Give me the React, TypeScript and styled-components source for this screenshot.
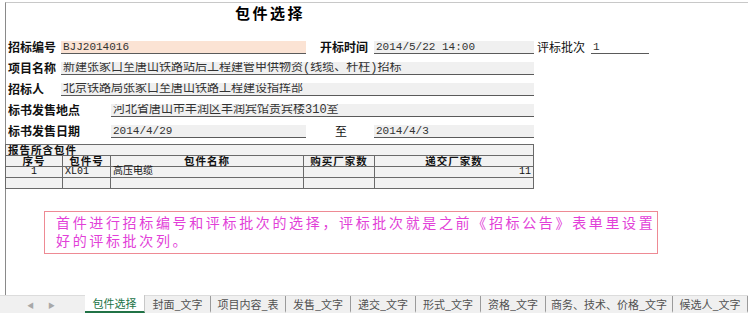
import styled, { createGlobalStyle } from "styled-components";

const GlobalStyle = createGlobalStyle`
    html, body {
        margin: 0;
        padding: 0;
        background: #ffffff;
        font-family: "Noto Sans CJK SC", "Liberation Sans", sans-serif;
    }
`;

const Page = styled.div`
    width: 748px;
    height: 313px;
    display: flex;
    flex-direction: column;
    overflow: hidden;
    background: #ffffff;
`;

const Sheet = styled.section`
    flex: 1;
    margin-top: 2px;
    margin-left: 5px;
    border-top: 1px solid #c8c8c8;
    border-left: 1px solid #8a8a8a;
    display: flex;
    flex-direction: column;
`;

const Title = styled.h2`
    width: 528px;
    margin: 0;
    padding-top: 1px;
    height: 29px;
    text-align: center;
    font-size: 15px;
    line-height: 18px;
    letter-spacing: 2.5px;
    font-weight: 700;
    color: #000;
`;

const Row = styled.div`
    display: flex;
    align-items: flex-end;
    height: 21px;
`;

const Label = styled.span<{ $w: number; $pl?: number; $normal?: boolean; $center?: boolean }>`
    width: ${(p) => p.$w}px;
    padding-left: ${(p) => p.$pl ?? 2}px;
    box-sizing: border-box;
    font-size: 12px;
    line-height: 14px;
    font-weight: ${(p) => (p.$normal ? 400 : 700)};
    text-align: ${(p) => (p.$center ? "center" : "left")};
    color: #111;
    white-space: nowrap;
`;

const Field = styled.span<{ $w: number; $bg?: string; $latin?: boolean }>`
    width: ${(p) => p.$w}px;
    height: 12px;
    box-sizing: content-box;
    padding-left: 2px;
    background: ${(p) => p.$bg ?? "#f0f0f0"};
    border-bottom: 1px solid #5a5a5a;
    font-family: ${(p) => (p.$latin ? `"Liberation Mono", "DejaVu Sans Mono", monospace` : `"Liberation Mono", "Noto Sans CJK SC", monospace`)};
    font-size: ${(p) => (p.$latin ? 11 : 12)}px;
    line-height: 13px;
    color: #333;
    white-space: nowrap;
    overflow: hidden;
`;

const Table = styled.table`
    margin-top: 6px;
    width: 528px;
    border-collapse: collapse;
    table-layout: fixed;
    font-size: 10px;
    color: #111;
    margin-left: -1px;
`;

const Cell = styled.td<{ $align?: string; $bold?: boolean }>`
    height: 10px;
    padding: 0 2px;
    border: 1px solid #6a6a6a;
    background: #f2f2f2;
    line-height: 10px;
    text-align: ${(p) => p.$align ?? "left"};
    font-weight: ${(p) => (p.$bold ? 700 : 400)};
    font-family: "Liberation Mono", "Noto Sans CJK SC", monospace;
    white-space: nowrap;
    vertical-align: middle;
`;

const HeadCell = styled(Cell)`
    font-family: "Noto Sans CJK SC", sans-serif;
    font-size: 10.5px;
    letter-spacing: 1px;
`;

const Note = styled.div`
    margin: 22px 0 0 38px;
    width: 595px;
    height: 40px;
    padding: 1px 6px 0 11px;
    border: 1px solid #ee8a94;
    font-size: 14px;
    line-height: 18px;
    letter-spacing: 2.65px;
    color: #e23fd8;
    white-space: nowrap;
`;

const TabBar = styled.nav`
    height: 17px;
    display: flex;
    align-items: stretch;
    background: #f0f0f0;
    border-top: 1px solid #dcdcdc;
    font-size: 11px;
    color: #505050;
`;

const Arrows = styled.div`
    width: 85px;
    display: flex;
    align-items: center;
    gap: 14px;
    padding-left: 27px;
    box-sizing: border-box;
    font-size: 7px;
    color: #a8a8a8;
`;

const Tab = styled.div<{ $active?: boolean; $w: number }>`
    width: ${(p) => p.$w}px;
    display: flex;
    align-items: center;
    justify-content: center;
    white-space: nowrap;
    background: ${(p) => (p.$active ? "#ffffff" : "transparent")};
    color: ${(p) => (p.$active ? "#217346" : "#505050")};
    border-bottom: 2px solid ${(p) => (p.$active ? "#217346" : "transparent")};
    border-right: 1px solid ${(p) => (p.$active ? "#c8c8c8" : "#9a9a9a")};
    box-sizing: border-box;
    margin-top: ${(p) => (p.$active ? -1 : 0)}px;
`;

const tabs = [
    { name: "包件选择", w: 60 },
    { name: "封面_文字", w: 66 },
    { name: "项目内容_表", w: 75 },
    { name: "发售_文字", w: 65 },
    { name: "递交_文字", w: 65 },
    { name: "形式_文字", w: 65 },
    { name: "资格_文字", w: 65 },
    { name: "商务、技术、价格_文字", w: 127 },
    { name: "候选人_文字", w: 75 },
];

const packages = [
    { no: "1", code: "XL01", name: "高压电缆", buy: "", submit: "11" },
    { no: "", code: "", name: "", buy: "", submit: "" },
];

export default () => {
    return (
        <Page>
            <GlobalStyle />
            <Sheet>
                <Title>包件选择</Title>
                <Row>
                    <Label $w={55}>招标编号</Label>
                    <Field $w={243} $bg="#fbe3d4" $latin>BJJ2014016</Field>
                    <Label $w={68} $pl={14}>开标时间</Label>
                    <Field $w={158} $latin>2014/5/22 14:00</Field>
                    <Label $w={57} $pl={3} $normal>评标批次</Label>
                    <Field $w={56} $bg="transparent" $latin>1</Field>
                </Row>
                <Row>
                    <Label $w={55}>项目名称</Label>
                    <Field $w={471}>新建张家口至唐山铁路站后工程建管甲供物资(线缆、杆柱)招标</Field>
                </Row>
                <Row>
                    <Label $w={55}>招标人</Label>
                    <Field $w={471}>北京铁路局张家口至唐山铁路工程建设指挥部</Field>
                </Row>
                <Row>
                    <Label $w={105}>标书发售地点</Label>
                    <Field $w={421}>河北省唐山市丰润区丰润宾馆贵宾楼310室</Field>
                </Row>
                <Row>
                    <Label $w={105}>标书发售日期</Label>
                    <Field $w={193} $latin>2014/4/29</Field>
                    <Label $w={68} $normal $center>至</Label>
                    <Field $w={158} $latin>2014/4/3</Field>
                </Row>
                <Table>
                    <colgroup>
                        <col style={{ width: 57 }} />
                        <col style={{ width: 48 }} />
                        <col style={{ width: 193 }} />
                        <col style={{ width: 71 }} />
                        <col style={{ width: 159 }} />
                    </colgroup>
                    <tbody>
                        <tr>
                            <HeadCell colSpan={5} $bold>报告所含包件</HeadCell>
                        </tr>
                        <tr>
                            <HeadCell $bold $align="center">序号</HeadCell>
                            <HeadCell $bold $align="center">包件号</HeadCell>
                            <HeadCell $bold $align="center">包件名称</HeadCell>
                            <HeadCell $bold $align="center">购买厂家数</HeadCell>
                            <HeadCell $bold $align="center">递交厂家数</HeadCell>
                        </tr>
                        {packages.map((p, i) => (
                            <tr key={i}>
                                <Cell $align="center">{p.no}</Cell>
                                <Cell>{p.code}</Cell>
                                <Cell>{p.name}</Cell>
                                <Cell>{p.buy}</Cell>
                                <Cell $align="right">{p.submit}</Cell>
                            </tr>
                        ))}
                    </tbody>
                </Table>
                <Note>
                    首件进行招标编号和评标批次的选择，评标批次就是之前《招标公告》表单里设置<br />
                    好的评标批次列。
                </Note>
            </Sheet>
            <TabBar>
                <Arrows>
                    <span>◀</span>
                    <span>▶</span>
                </Arrows>
                {tabs.map((t, i) => (
                    <Tab key={t.name} $w={t.w} $active={i === 0}>{t.name}</Tab>
                ))}
            </TabBar>
        </Page>
    );
};
